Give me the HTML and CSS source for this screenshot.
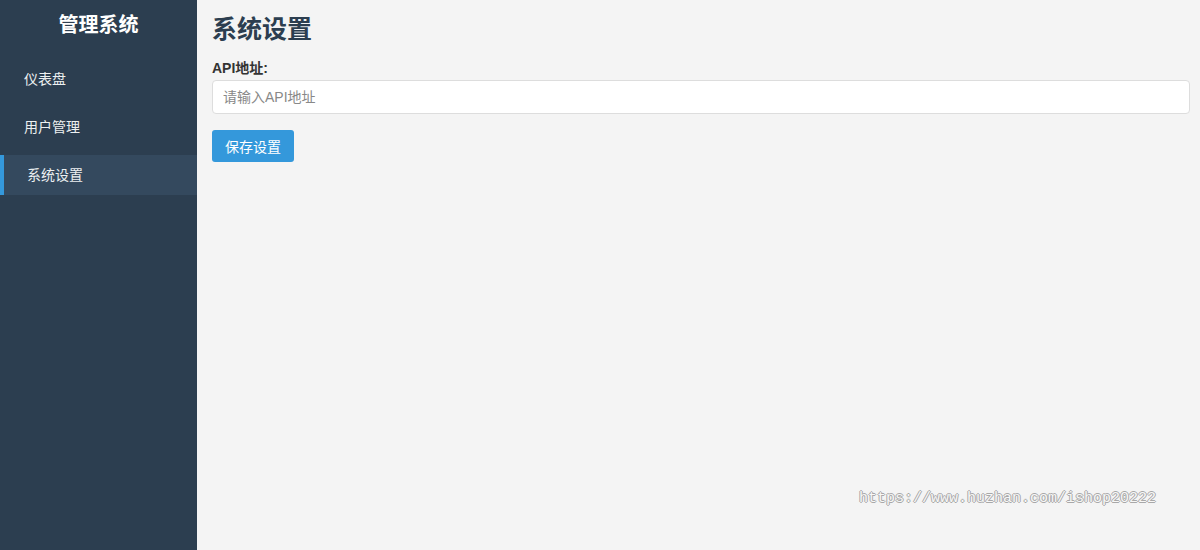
FILE: index.html
```html
<!DOCTYPE html>
<html lang="zh-CN">
<head>
<meta charset="utf-8">
<title>系统设置</title>
<link rel="stylesheet" href="styles.css">
</head>
<body>
<div class="layout">
  <aside class="sidebar">
    <h2 class="brand">管理系统</h2>
    <ul class="menu">
      <li class="menu-item">仪表盘</li>
      <li class="menu-item">用户管理</li>
      <li class="menu-item active">系统设置</li>
    </ul>
  </aside>
  <main class="content">
    <h1 class="page-title">系统设置</h1>
    <div class="form-group">
      <label class="form-label" for="api">API地址:</label>
      <input class="form-input" id="api" type="text" placeholder="请输入API地址">
    </div>
    <button class="btn-primary" type="button">保存设置</button>
  </main>
</div>
<div class="watermark">https://www.huzhan.com/ishop20222</div>
</body>
</html>
```
FILE: styles.css
```css
* { box-sizing: border-box; }
html, body { margin: 0; padding: 0; height: 100%; }
body {
  font-family: "Liberation Sans", "Noto Sans CJK SC", sans-serif;
  background: #f4f4f4;
  color: #333;
}
.layout {
  display: flex;
  min-height: 100vh;
}
.sidebar {
  width: 197px;
  flex: 0 0 197px;
  background: #2c3e50;
  color: #ecf0f1;
}
.brand {
  margin: 0;
  padding-top: 11px;
  height: 59px;
  font-size: 20px;
  line-height: 28px;
  text-align: center;
  font-weight: bold;
  color: #fff;
}
.menu {
  list-style: none;
  margin: 0;
  padding: 0;
  display: flex;
  flex-direction: column;
  gap: 8px;
}
.menu-item {
  height: 40px;
  line-height: 40px;
  padding-left: 24px;
  font-size: 14px;
  color: #ecf0f1;
}
.menu-item.active {
  background: #34495e;
  border-left: 4px solid #3498db;
  padding-left: 23px;
}
.content {
  flex: 1;
  padding: 13px 10px 0 15px;
}
.page-title {
  margin: 0 0 15px;
  font-size: 25px;
  line-height: 32px;
  font-weight: bold;
  color: #2c3e50;
}
.form-group {
  display: flex;
  flex-direction: column;
  gap: 4px;
  margin-bottom: 16px;
}
.form-label {
  font-size: 14px;
  line-height: 16px;
  font-weight: bold;
  color: #333;
}
.form-input {
  height: 34px;
  width: 100%;
  padding: 0 10px;
  border: 1px solid #ddd;
  border-radius: 4px;
  background: #fff;
  font-family: inherit;
  font-size: 14px;
  color: #333;
}
.form-input::placeholder { color: #888; }
.btn-primary {
  height: 32px;
  padding: 0 13px;
  border: none;
  border-radius: 3px;
  background: #3498db;
  color: #fff;
  font-family: inherit;
  font-size: 14px;
}
.watermark {
  position: absolute;
  left: 859px;
  top: 489px;
  font-family: "Liberation Mono", monospace;
  font-size: 15px;
  line-height: 20px;
  color: #f7f7f7;
  text-shadow: 1px 0 0 #a8a8a8, -1px 0 0 #a8a8a8, 0 1px 0 #a8a8a8, 0 -1px 0 #a8a8a8;
}
```
